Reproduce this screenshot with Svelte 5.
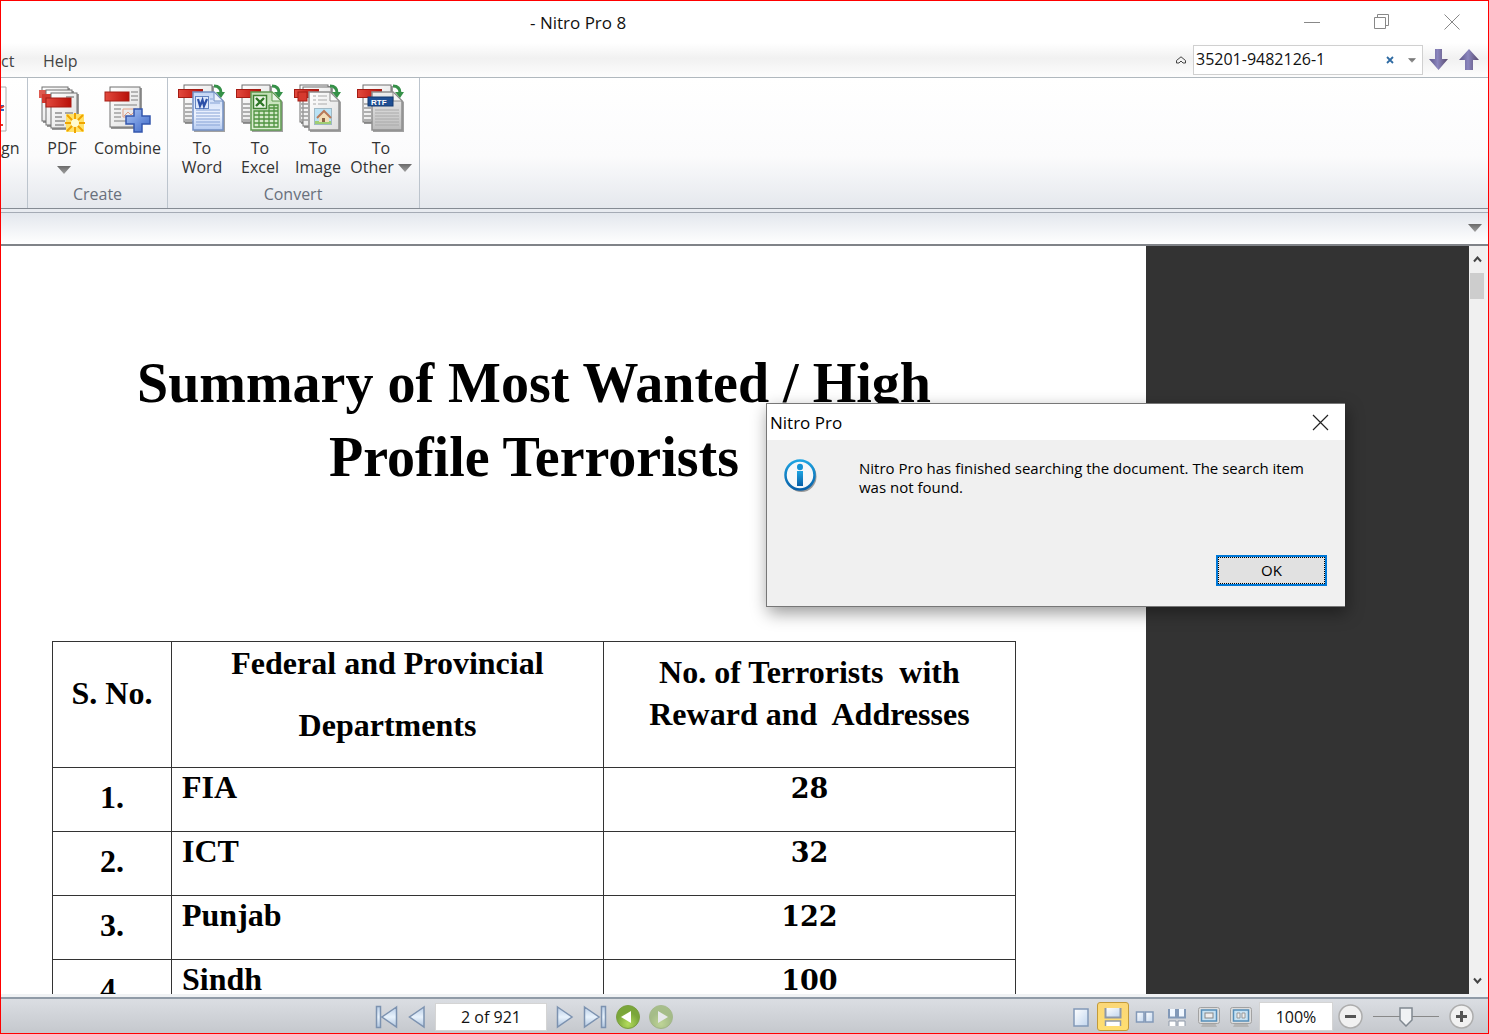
<script>
  let query = $state('35201-9482126-1');
  let page = $state('2 of 921');
  let zoom = $state('100%');
  let level = $state(50);

  const createTools = [
    { kind: 'pdf', lines: ['PDF'], caret: 'below' },
    { kind: 'combine', lines: ['Combine'] }
  ];
  const convertTools = [
    { kind: 'word', lines: ['To', 'Word'] },
    { kind: 'excel', lines: ['To', 'Excel'] },
    { kind: 'image', lines: ['To', 'Image'] },
    { kind: 'other', lines: ['To', 'Other'], caret: 'beside' }
  ];
  const rows = [
    ['1.', 'FIA', '28'],
    ['2.', 'ICT', '32'],
    ['3.', 'Punjab', '122'],
    ['4.', 'Sindh', '100']
  ];
  const views = ['single', 'scroll', 'facing', 'facingScroll', 'screen', 'screenTwo'];
</script>

{#snippet caret(w)}
  <svg class="caret" width={w} height={w / 2 + 1} viewBox="0 0 14 8"><path d="M0 0H14L7 8Z" fill="url(#caretFill)" /></svg>
{/snippet}

{#snippet sheet(x, y, w, h)}
  <rect x={x + 1} y={y + 1} width={w + 1} height={h + 1} fill="#555" opacity=".6" />
  <rect {x} {y} width={w} height={h} fill="url(#sheetFill)" stroke="#707070" />
{/snippet}

{#snippet convertedSheet(fill, stroke)}
  <path d="M16 9H38L47 18V48H16Z" fill="#555" opacity=".55" />
  <path d="M15 8H36L45 17V46H15Z" fill={fill} stroke={stroke} stroke-width="1.5" />
  <path d="M36 8V17H45Z" fill="#fff" fill-opacity=".65" stroke={stroke} />
  <path d="M36 2C41 2 43 5 43 9" fill="none" stroke="#359048" stroke-width="3" />
  <path d="M38 8H47L43 14Z" fill="#359048" />
{/snippet}

{#snippet toolIcon(kind)}
  <svg width="48" height="50" viewBox="0 0 48 50" aria-hidden="true">
    {#if kind === 'pdf'}
      {@render sheet(4, 3, 26, 34)}
      <rect x="1" y="6" width="20" height="8" fill="#de5a50" />
      {@render sheet(8, 6, 26, 35)}
      <rect x="4" y="10" width="22" height="9" fill="#d33a30" />
      {@render sheet(13, 9, 26, 35)}
      <path d="M28 13H36M17 29H24M27 29H35M17 33H24M17 37H27M17 41H26" stroke="#a7a7a7" stroke-width="2" />
      <rect x="8" y="14" width="25" height="9" fill="url(#redFill)" stroke="#a51c14" />
      <rect x="28" y="30" width="18" height="18" fill="#ffe26a" />
      <path d="M37 29V49M27 39H47M29 31L45 47M45 31L29 47" stroke="#f0a400" stroke-width="2" />
      <circle cx="37" cy="39" r="4" fill="#fffbd0" />
    {:else if kind === 'combine'}
      {@render sheet(6, 3, 30, 40)}
      <path d="M27 8H34M27 12H34M27 16H34M10 21H33M10 25H17M10 29H17M10 33H17M10 37H24" stroke="#b5b5b5" stroke-width="2" />
      <path d="M19 25H32V33H19ZM20 32L24 28L27 31L31 27" fill="none" stroke="#e0a087" />
      <rect x="1" y="8" width="24" height="9" fill="url(#redFill)" stroke="#a51c14" />
      <path d="M30 25H38V32H46V40H38V48H30V40H22V32H30Z" fill="url(#plusFill)" stroke="#3457ad" stroke-width="1.5" />
    {:else}
      {@render sheet(6, 1, 28, 37)}
      {#if kind === 'image'}
        {@render sheet(9, 3, 28, 39)}
      {/if}
      <path d="M7 20H14M7 24H14M7 28H14M7 32H14M7 36H14" stroke="#999" stroke-width="1.5" />
      <rect x="0.5" y="5.5" width="24" height="8" fill="url(#redFill)" stroke="#a51c14" />
      {#if kind === 'word'}
        {@render convertedSheet('url(#blueSheet)', '#7390c4')}
        <path d="M32 15H35M32 19H42M18 26H42M18 29H42M18 32H42M18 35H42M18 38H42M18 41H42" stroke="#87a3d6" />
        <rect x="17.5" y="12.5" width="13" height="12" fill="#dfe9fb" stroke="#6484c0" />
        <path d="M20 15L22 22L24.5 16L26 22L29 15" fill="none" stroke="#2c50a8" stroke-width="2.2" />
      {:else if kind === 'excel'}
        {@render convertedSheet('url(#greenSheet)', '#5f9a50')}
        <path d="M18 27H42V43H18ZM18 31H42M18 35H42M18 39H42M23 27V43M28 27V43M33 21V43M38 21V43M33 21H42V27M33 24H42" fill="none" stroke="#4f9340" stroke-width="1.3" />
        <rect x="17.5" y="11.5" width="13" height="13" fill="#eef7e9" stroke="#3e8132" stroke-width="1.5" />
        <path d="M20 14L28 22M28 14L20 22" stroke="#2d7525" stroke-width="2.4" />
      {:else if kind === 'image'}
        {@render convertedSheet('url(#sheetFill)', '#8f8f8f')}
        <rect x="4" y="8" width="9" height="9" fill="#d6392e" stroke="#a51c14" />
        <path d="M19 12H22M24 12H33M19 16H22M24 16H33M19 20H22M24 20H33" stroke="#c2c2c2" stroke-width="1.5" />
        <rect x="20.5" y="24.500" width="17" height="16" fill="#b9e2f5" stroke="#a0b8c4" />
        <rect x="21" y="37" width="16" height="3" fill="#9fce74" />
        <path d="M25 33L30 28L35 33V38H25Z" fill="#f3dfb8" />
        <path d="M23 34L30 27L37 34" fill="none" stroke="#b87a58" stroke-width="2" />
        <rect x="28" y="34" width="3" height="4" fill="#8b6545" />
      {:else}
        {@render convertedSheet('url(#graySheet)', '#8f8f8f')}
        <path d="M18 26H42M18 29H42M18 32H42M18 35H42M18 38H42M18 41H42" stroke="#aaa" />
        <rect x="11" y="13" width="25" height="9" fill="#1f4f93" stroke="#153a70" />
        <text x="14" y="20.500" class="rtf">RTF</text>
      {/if}
    {/if}
  </svg>
{/snippet}

{#snippet tool(t)}
  <button class="tool {t.kind}">
    {@render toolIcon(t.kind)}
    {#each t.lines as line, i}
      <span>{line}{#if t.caret === 'beside' && i === 1}{@render caret(14)}{/if}</span>
    {/each}
    {#if t.caret === 'below'}<span class="under">{@render caret(14)}</span>{/if}
  </button>
{/snippet}

{#snippet viewIcon(kind)}
  <svg width="24" height="24" viewBox="0 0 24 24" aria-hidden="true">
    {#if kind === 'single'}
      <rect x="5" y="4" width="14" height="17" fill="url(#iceFill)" stroke="#8299b8" stroke-width="1.5" />
    {:else if kind === 'scroll'}
      <path d="M4.500 3V12H19.500V3Z" fill="url(#iceFill)" />
      <path d="M4.500 3V12.500H19.500V3" fill="none" stroke="#8d98a8" stroke-width="2" />
      <path d="M4.500 21V16H19.500V21" fill="#fff" stroke="#8d98a8" stroke-width="1.5" />
    {:else if kind === 'facing'}
      <rect x="3.500" y="7" width="7.500" height="10" fill="url(#iceFill)" stroke="#8299b8" stroke-width="1.5" />
      <rect x="12.500" y="7" width="7.500" height="10" fill="url(#iceFill)" stroke="#8299b8" stroke-width="1.5" />
    {:else if kind === 'facingScroll'}
      <path d="M4 4V12.500H11V4M13 4V12.500H20V4" fill="#f2f8ff" stroke="#8299b8" stroke-width="2" />
      <path d="M4 21V16H11V21M13 21V16H20V21" fill="#fff" stroke="#8d98a8" />
    {:else}
      <path d="M6 18H18L20 22H4Z" fill="#b4b4b4" />
      <rect x="1.500" y="2.500" width="21" height="16" rx="2" fill="#ddd" stroke="#a2a2a2" />
      <rect x="4.500" y="5" width="15" height="11" fill="#c7e2f3" stroke="#568eb9" stroke-width="1.5" />
      {#if kind === 'screen'}
        <rect x="8" y="8" width="8" height="5" fill="#eee" stroke="#888" />
      {:else}
        <path d="M8 8H11V13H8ZM13 8H16V13H13Z" fill="#eee" stroke="#999" />
      {/if}
    {/if}
  </svg>
{/snippet}

<div class="window">
  <svg class="defs" aria-hidden="true">
    <defs>
      <linearGradient id="caretFill" x2="0" y2="1"><stop stop-color="#6a6a6a" /><stop offset="1" stop-color="#a0a0a0" /></linearGradient>
      <linearGradient id="sheetFill" x2="1" y2="1"><stop stop-color="#fff" /><stop offset="1" stop-color="#dedede" /></linearGradient>
      <linearGradient id="graySheet" x2="0" y2="1"><stop stop-color="#eee" /><stop offset="1" stop-color="#bcbcbc" /></linearGradient>
      <linearGradient id="redFill"><stop stop-color="#e24a3e" /><stop offset="1" stop-color="#b80f08" /></linearGradient>
      <linearGradient id="plusFill" x2="1" y2="1"><stop stop-color="#a8c4f5" /><stop offset="1" stop-color="#3d68c8" /></linearGradient>
      <linearGradient id="blueSheet" x2="0" y2="1"><stop stop-color="#c3d5f5" /><stop offset=".6" stop-color="#eef4ff" /><stop offset="1" stop-color="#b4caf0" /></linearGradient>
      <linearGradient id="greenSheet" x2="0" y2="1"><stop stop-color="#c2dfb6" /><stop offset="1" stop-color="#deefd4" /></linearGradient>
      <linearGradient id="purple" x2="1"><stop stop-color="#5c5486" /><stop offset=".45" stop-color="#8b86be" /><stop offset="1" stop-color="#57486c" /></linearGradient>
      <linearGradient id="iceFill" x2="1" y2="1"><stop stop-color="#fff" /><stop offset="1" stop-color="#c2d6ee" /></linearGradient>
      <linearGradient id="navFill" x2="0" y2="1"><stop stop-color="#b9cde6" /><stop offset=".5" stop-color="#e8f2fc" /><stop offset="1" stop-color="#aec4de" /></linearGradient>
      <radialGradient id="limeFill" cy=".8"><stop stop-color="#b4dc5c" /><stop offset="1" stop-color="#7aa63a" /></radialGradient>
      <linearGradient id="infoFill" x2="0" y2="1"><stop stop-color="#1ea4e2" /><stop offset="1" stop-color="#0860a8" /></linearGradient>
    </defs>
  </svg>

  <header class="title">
    <span class="name">- Nitro Pro 8</span>
    <button aria-label="Minimize"><svg width="16" height="16"><path d="M0 8.500H16" stroke="#888" /></svg></button>
    <button aria-label="Restore"><svg width="16" height="16" fill="none" stroke="#888"><path d="M.5 3.500H11.500V14.500H.5ZM3.500 3.500V.5H14.500V11.500H11.500" /></svg></button>
    <button aria-label="Close"><svg width="16" height="16"><path d="M0.500 0.500L15.500 15.500M15.500 0.500L0.500 15.500" stroke="#888" /></svg></button>
  </header>

  <nav class="menu">
    <a class="cut" href="#protect"><span>ct</span></a>
    <a href="#help">Help</a>
    <button class="collapse" aria-label="Collapse ribbon"><svg width="10" height="9" fill="none" stroke="#444"><path d="M.5 4.500L5 .8L9.500 4.500V7H7L5 5L3 7H.5Z" /></svg></button>
    <div class="search">
      <input aria-label="Find" bind:value={query} />
      <button aria-label="Clear"><svg width="8" height="8"><path d="M1 1L7 7M7 1L1 7" stroke="#2f6ba3" stroke-width="1.800" /></svg></button>
      <button aria-label="Search options">{@render caret(8)}</button>
    </div>
    <button class="find" aria-label="Find next"><svg width="20" height="22"><path d="M6 0H13V10H19L9.500 21L0 10H6Z" fill="url(#purple)" /></svg></button>
    <button class="find" aria-label="Find previous"><svg width="20" height="22"><path d="M6 21V11H0L10 0L20 11H14V21Z" fill="url(#purple)" /></svg></button>
  </nav>

  <div class="ribbon">
    <section class="group sign">
      <button class="tool">
        <svg width="6" height="50" viewBox="0 0 6 50"><path d="M0 3H5V47H0" fill="#fff" stroke="#aaa" /><path d="M0 22H3M0 26H3" stroke="#316bc2" stroke-width="2" /><path d="M0 24L3 22M0 41H2" stroke="#dc3c30" stroke-width="2" /></svg>
        <span>gn</span>
      </button>
    </section>
    <section class="group create">
      <div class="tools">{#each createTools as t}{@render tool(t)}{/each}</div>
      <h2>Create</h2>
    </section>
    <section class="group convert">
      <div class="tools">{#each convertTools as t}{@render tool(t)}{/each}</div>
      <h2>Convert</h2>
    </section>
  </div>

  <div class="strip"><button aria-label="Open documents">{@render caret(14)}</button></div>

  <main class="viewer">
    <article class="paper">
      <h1>Summary of Most Wanted / High<br />Profile Terrorists</h1>
      <table>
        <thead>
          <tr>
            <th class="no">S. No.</th>
            <th class="dept"><span>Federal and Provincial</span><span>Departments</span></th>
            <th class="count">No. of Terrorists&nbsp; with<br />Reward and&nbsp; Addresses</th>
          </tr>
        </thead>
        <tbody>
          {#each rows as [no, name, count]}
            <tr><td class="no">{no}</td><td class="dept">{name}</td><td class="count">{count}</td></tr>
          {/each}
        </tbody>
      </table>
    </article>
    <div class="desk"></div>
    <div class="scrollbar">
      <button aria-label="Scroll up"><svg width="9" height="7"><path d="M1 5.500L4.500 1.500L8 5.500" fill="none" stroke="#444" stroke-width="2" /></svg></button>
      <div class="thumb"></div>
      <button class="down" aria-label="Scroll down"><svg width="9" height="7"><path d="M1 1.500L4.500 5.500L8 1.500" fill="none" stroke="#444" stroke-width="2" /></svg></button>
    </div>
  </main>

  <footer class="status">
    <div class="pager">
      <button aria-label="First page"><svg width="24" height="24" fill="url(#navFill)" stroke="#7c92b0" stroke-width="1.500"><path d="M1.500 1.500H5.500V22.500H1.500ZM21.500 2L7 12L21.500 22Z" /></svg></button>
      <button aria-label="Previous page"><svg width="18" height="24" fill="url(#navFill)" stroke="#7c92b0" stroke-width="1.500"><path d="M16 2L1.500 12L16 22Z" /></svg></button>
      <input class="page" aria-label="Page" bind:value={page} />
      <button aria-label="Next page"><svg width="18" height="24" fill="url(#navFill)" stroke="#7c92b0" stroke-width="1.500"><path d="M1.500 2L16 12L1.500 22Z" /></svg></button>
      <button aria-label="Last page"><svg width="24" height="24" fill="url(#navFill)" stroke="#7c92b0" stroke-width="1.500"><path d="M18.500 1.500H22.500V22.500H18.500ZM1.500 2L16 12L1.500 22Z" /></svg></button>
      <button aria-label="Previous view"><svg width="24" height="24"><circle cx="12" cy="12" r="11.500" fill="url(#limeFill)" stroke="#7a9e42" /><path d="M15 6V18L5 12Z" fill="#fff" /></svg></button>
      <button class="faded" aria-label="Next view"><svg width="24" height="24"><circle cx="12" cy="12" r="11.500" fill="url(#limeFill)" stroke="#7a9e42" /><path d="M9 6V18L19 12Z" fill="#fff" /></svg></button>
    </div>
    <div class="views">
      {#each views as v}
        <button class:active={v === 'scroll'} aria-label={v}>{@render viewIcon(v)}</button>
      {/each}
    </div>
    <input class="zoom" aria-label="Zoom" bind:value={zoom} />
    <button aria-label="Zoom out"><svg width="25" height="25"><circle cx="12.500" cy="12.500" r="11.500" fill="#f1f1f1" stroke="#adadad" stroke-width="1.500" /><path d="M7 12.500H18" stroke="#555" stroke-width="3" /></svg></button>
    <input class="slider" type="range" aria-label="Zoom level" bind:value={level} />
    <button aria-label="Zoom in"><svg width="25" height="25"><circle cx="12.500" cy="12.500" r="11.500" fill="#f1f1f1" stroke="#adadad" stroke-width="1.500" /><path d="M7 12.500H18M12.500 7V18" stroke="#555" stroke-width="3" /></svg></button>
  </footer>

  <div class="dialog" role="dialog" aria-labelledby="dlg-title">
    <div class="dlg-head">
      <span id="dlg-title">Nitro Pro</span>
      <button aria-label="Close message"><svg width="17" height="17"><path d="M1 1L16 16M16 1L1 16" stroke="#222" stroke-width="1.200" /></svg></button>
    </div>
    <div class="dlg-body">
      <svg width="34" height="34" aria-hidden="true"><ellipse cx="17.500" cy="17.500" rx="15" ry="15.500" fill="#999" /><ellipse cx="16" cy="16" rx="14.500" ry="14.500" fill="#f6f8fa" stroke="url(#infoFill)" stroke-width="2.500" /><ellipse cx="16" cy="8" rx="3" ry="3.200" fill="#1592d4" /><rect x="13" y="12" width="6" height="15" fill="url(#infoFill)" /></svg>
      <p>Nitro Pro has finished searching the document. The search item<br />was not found.</p>
    </div>
    <div class="dlg-foot"><button class="ok">OK</button></div>
  </div>
</div>

<style>
  :global(body) { margin: 0; }
  .window, .window * { box-sizing: border-box; }
  .window {
    position: relative;
    display: flex;
    flex-direction: column;
    height: 100vh;
    overflow: hidden;
    border: 1px solid #f00;
    background: #fff;
    font: 16px/19px "Open Sans", "Noto Sans", sans-serif;
    color: #333;
  }
  svg { display: block; flex: none; }
  .defs { position: absolute; width: 0; height: 0; }
  button { padding: 0; border: 0; background: none; font: inherit; color: inherit; }
  button, header, nav, footer { display: flex; align-items: center; flex: none; }
  button { justify-content: center; }
  input { border: 1px solid #d4d4d4; background: #fff; font: inherit; color: #111; min-width: 0; outline: 0; margin: 0; }

  .title { height: 42px; padding: 0 28px 0 529px; gap: 54px; }
  .name { flex: 1; font-size: 17px; color: #111; }

  .menu {
    height: 35px;
    padding-right: 9px;
    background: linear-gradient(#fff, #f1f1f1 45%, #fdfdfd);
    border-bottom: 1px solid #b0b8be;
  }
  .menu a { padding-top: 2px; color: #444; text-decoration: none; }
  .cut { width: 42px; overflow: hidden; }
  .collapse { margin: 0 7px 0 auto; }
  .search { display: flex; width: 230px; height: 30px; margin-right: 6px; border: 1px solid #d0d0d0; background: #fff; }
  .search input { flex: 1; border: 0; padding: 0 2px 2px; }
  .search button { width: 24px; }
  .search button:last-child { width: 20px; }
  .find + .find { margin-left: 10px; }

  .ribbon {
    display: flex;
    flex: none;
    height: 131px;
    background: linear-gradient(#fff, #fbfbfc 60%, #e5e8ed);
    border-bottom: 1px solid #858b93;
  }
  .group { display: flex; flex-direction: column; border-right: 1px solid #bcc4cd; padding-top: 6px; }
  .sign { width: 27px; align-items: flex-start; overflow: hidden; }
  .sign .tool { align-items: flex-start; }
  .create { width: 140px; padding-left: 6px; }
  .convert { width: 252px; padding-left: 5px; }
  .tools { display: flex; height: 100px; }
  .tool { flex-direction: column; justify-content: flex-start; }
  .tool > svg { margin-bottom: 5px; }
  .tool span { display: flex; align-items: center; gap: 4px; white-space: nowrap; }
  .pdf { width: 56px; }
  .combine { width: 75px; }
  .word, .excel, .image { width: 58px; }
  .other { width: 68px; }
  .under { height: 24px; padding-left: 4px; }
  h2 { margin: 0; padding: 1px 6px 0 0; font: inherit; text-align: center; color: #69707c; }

  .strip {
    display: flex;
    flex: none;
    justify-content: flex-end;
    height: 37px;
    padding: 0 6px 0 0;
    border-top: 3px solid #e8ebf0;
    border-bottom: 2px solid #808388;
    background: linear-gradient(#a5abb5 1px, #e3e7ed 1px, #fff);
  }

  .viewer { display: flex; flex: 1; min-height: 0; padding-right: 2px; background: #f2f2f2; }
  .paper {
    flex: none;
    width: 77.1%;
    padding: 100px 130px 0 51px;
    overflow: hidden;
    background: #fff;
    color: #000;
    font-family: "Liberation Serif", serif;
    font-weight: bold;
  }
  .desk { flex: 1; background: #333; }
  h1 { margin: 0 0 147px; font-size: 56px; line-height: 74px; text-align: center; white-space: nowrap; }
  table { width: 100%; border-collapse: collapse; table-layout: fixed; font-size: 32px; }
  th, td { border: 1px solid #333; padding: 0; white-space: nowrap; }
  th { height: 126px; line-height: 42px; }
  th.no { width: 119px; padding-bottom: 24px; }
  th.dept { vertical-align: top; }
  th.dept span { display: block; margin-bottom: 20px; }
  th.count { width: 412px; padding-bottom: 24px; }
  td { height: 64px; line-height: 38px; vertical-align: top; }
  td.no { text-align: center; padding-top: 10px; }
  td.dept { padding-left: 10px; }
  td.count { text-align: center; font: bold 27px/42px "DejaVu Serif", serif; }

  .scrollbar { display: flex; flex-direction: column; width: 17px; background: #f0f0f0; }
  .scrollbar button { height: 27px; }
  .thumb { height: 26px; margin: 0 2px 0 1px; background: #cdcdcd; }
  .scrollbar .down { margin-top: auto; }

  .status {
    height: 39px;
    border-top: 3px solid #f0f2f4;
    box-shadow: inset 0 2px #909ba7;
    background: linear-gradient(#dcdfe4, #c5c8cd);
    padding: 3px 14px 0 374px;
  }
  .pager { display: flex; align-items: center; gap: 9px; flex: 1; }
  .page { width: 112px; height: 28px; text-align: center; }
  .faded { opacity: .5; }
  .views { display: flex; margin-right: 2px; }
  .views button { width: 32px; height: 29px; }
  .views .active { border: 1px solid #c29a3a; border-radius: 3px; background: linear-gradient(#fbd778, #ffdf70); }
  .zoom { width: 74px; height: 29px; margin-right: 5px; text-align: center; }
  .slider { appearance: none; width: 66px; height: 24px; margin: 0 10px; border: 0; background: linear-gradient(#888, #888) center / 100% 1px no-repeat; }
  .slider::-webkit-slider-thumb {
    appearance: none;
    width: 14px;
    height: 20px;
    background: url("data:image/svg+xml,%3Csvg xmlns='http://www.w3.org/2000/svg' width='14' height='20'%3E%3Cpath d='M1 1H13V13L7 19L1 13Z' fill='%23f0f2f4' stroke='%23808890' stroke-width='1.5'/%3E%3C/svg%3E");
  }

  .dialog {
    position: absolute;
    left: 765px;
    top: 402px;
    width: 579px;
    display: flex;
    flex-direction: column;
    border: 1px solid #777;
    border-right: 0;
    background: #f0f0f0;
    box-shadow: 2px 6px 16px rgba(0, 0, 0, .4);
    font-size: 15px;
    color: #000;
  }
  .dlg-head { display: flex; justify-content: space-between; align-items: center; height: 36px; padding: 0 16px 0 3px; background: #fff; font-size: 17px; }
  .dlg-body { display: flex; gap: 41px; padding: 19px 17px 0; height: 115px; }
  .dlg-body p { margin: 0; white-space: nowrap; }
  .dlg-foot { display: flex; justify-content: flex-end; padding: 0 18px 20px; }
  .ok { width: 111px; height: 31px; border: 2px solid #0078d7; background: #e1e1e1; outline: 1px dotted #000; outline-offset: -3px; }
  .rtf { font: bold 8px "Liberation Sans", sans-serif; fill: #fff; }
</style>
